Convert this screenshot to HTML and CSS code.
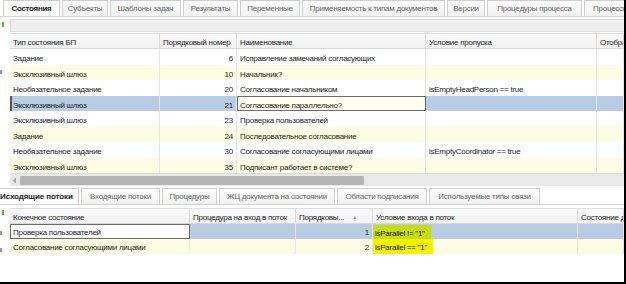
FILE: index.html
```html
<!DOCTYPE html>
<html lang="ru">
<head>
    <meta charset="UTF-8">
    <title>Состояния</title>
    <link rel="stylesheet" href="styles.css">
</head>
<body>

<div class="frame">
    <div class="tabs top-tabs">
        <span class="tab active">Состояния</span>
        <span class="tab">Субъекты</span>
        <span class="tab">Шаблоны задач</span>
        <span class="tab">Результаты</span>
        <span class="tab">Переменные</span>
        <span class="tab">Применяемость к типам документов</span>
        <span class="tab">Версии</span>
        <span class="tab">Процедуры процесса</span>
        <span class="tab">Процессы</span>
    </div>

    <div class="pane">
        <div class="gutter">
            <span class="mark green m1"></span>
            <span class="mark gray m2"></span>
        </div>
        <div class="main">
            <div class="toolbar"></div>

            <div class="grid states">
                <div class="row head">
                    <div class="cell">Тип состояния БП</div>
                    <div class="cell">Порядковый номер</div>
                    <div class="cell">Наименование</div>
                    <div class="cell">Условие пропуска</div>
                    <div class="cell">Отобра</div>
                </div>
                <div class="row">
                    <div class="cell">Задание</div>
                    <div class="cell num">6</div>
                    <div class="cell">Исправление замечаний согласующих</div>
                    <div class="cell"></div>
                    <div class="cell"></div>
                </div>
                <div class="row alt">
                    <div class="cell">Эксклюзивный шлюз</div>
                    <div class="cell num">10</div>
                    <div class="cell">Начальник?</div>
                    <div class="cell"></div>
                    <div class="cell"></div>
                </div>
                <div class="row">
                    <div class="cell">Необязательное задание</div>
                    <div class="cell num">20</div>
                    <div class="cell">Согласование начальником</div>
                    <div class="cell">isEmptyHeadPerson == true</div>
                    <div class="cell"></div>
                </div>
                <div class="row selected">
                    <div class="cell">Эксклюзивный шлюз</div>
                    <div class="cell num">21</div>
                    <div class="cell focus">Согласование параллельно?</div>
                    <div class="cell"></div>
                    <div class="cell"></div>
                </div>
                <div class="row">
                    <div class="cell">Эксклюзивный шлюз</div>
                    <div class="cell num">23</div>
                    <div class="cell">Проверка пользователей</div>
                    <div class="cell"></div>
                    <div class="cell"></div>
                </div>
                <div class="row alt">
                    <div class="cell">Задание</div>
                    <div class="cell num">24</div>
                    <div class="cell">Последовательное согласование</div>
                    <div class="cell"></div>
                    <div class="cell"></div>
                </div>
                <div class="row">
                    <div class="cell">Необязательное задание</div>
                    <div class="cell num">30</div>
                    <div class="cell">Согласование согласующими лицами</div>
                    <div class="cell">isEmptyCoordinator == true</div>
                    <div class="cell"></div>
                </div>
                <div class="row alt">
                    <div class="cell">Эксклюзивный шлюз</div>
                    <div class="cell num">35</div>
                    <div class="cell">Подписант работает в системе?</div>
                    <div class="cell"></div>
                    <div class="cell"></div>
                </div>

                <div class="scrollbar">
                    <svg class="scroll-arrow" width="10" height="11" viewBox="0 0 10 11"><path d="M6 2.5 L3 5.5 L6 8.5 Z" fill="#a4a4a4"/></svg>
                    <div class="scroll-thumb"></div>
                </div>
            </div>
        </div>
    </div>

    <div class="tabs bottom-tabs">
        <span class="tab active">Исходящие потоки</span>
        <span class="tab">Входящие потоки</span>
        <span class="tab">Процедуры</span>
        <span class="tab">ЖЦ документа на состоянии</span>
        <span class="tab">Области подписания</span>
        <span class="tab">Используемые типы связи</span>
    </div>

    <div class="pane">
        <div class="gutter">
            <span class="mark green m3"></span>
            <span class="mark gray m4"></span>
            <span class="mark gray m5"></span>
        </div>
        <div class="main">
            <div class="grid flows">
                <div class="row head">
                    <div class="cell">Конечное состояние</div>
                    <div class="cell">Процедура на вход в поток</div>
                    <div class="cell sort">Порядковы... <span class="sort-arrow">&#9650;</span></div>
                    <div class="cell">Условие входа в поток</div>
                    <div class="cell">Состояние дл</div>
                </div>
                <div class="row selected">
                    <div class="cell edit">Проверка пользователей</div>
                    <div class="cell"></div>
                    <div class="cell num">1</div>
                    <div class="cell cond"><span class="marker on-blue">isParallel != "1"</span></div>
                    <div class="cell"></div>
                </div>
                <div class="row alt">
                    <div class="cell">Согласование согласующими лицами</div>
                    <div class="cell"></div>
                    <div class="cell num">2</div>
                    <div class="cell cond"><span class="marker">isParallel == "1"</span></div>
                    <div class="cell"></div>
                </div>
            </div>
        </div>
    </div>
</div>

</body>
</html>
```

FILE: styles.css
```css
/* Global */
body {
    margin: 0;
    font-family: 'Liberation Sans', Arial, sans-serif;
    font-size: 8px;
    letter-spacing: -0.25px;
    color: #222;
    background: #fff;
}

.frame {
    width: 624px;
    height: 282px;
    border-right: 2px solid #000;
    border-bottom: 2px solid #000;
    overflow: hidden;
}

/* Tabs */
.tabs {
    display: flex;
    gap: 2px;
    height: 17px;
    border-bottom: 1px solid #d4d4d4;
    box-sizing: border-box;
    overflow: hidden;
}

.top-tabs {
    padding-left: 3px;
}

.bottom-tabs {
    margin-top: 2px;
    margin-left: -6px;
}

.tab {
    display: flex;
    align-items: center;
    justify-content: center;
    flex-shrink: 0;
    border: 1px solid #cfcfcf;
    border-bottom: none;
    background: linear-gradient(#fdfdfd, #f1f1f1);
    color: #666;
    white-space: nowrap;
    box-sizing: border-box;
}

.tab.active {
    background: #fff;
    color: #222;
    font-weight: bold;
    letter-spacing: -0.3px;
}

.top-tabs .tab:nth-child(1) { width: 57px; }
.top-tabs .tab:nth-child(2) { width: 46px; }
.top-tabs .tab:nth-child(3) { width: 71px; }
.top-tabs .tab:nth-child(4) { width: 55px; }
.top-tabs .tab:nth-child(5) { width: 60px; }
.top-tabs .tab:nth-child(6) { width: 143px; }
.top-tabs .tab:nth-child(7) { width: 38px; }
.top-tabs .tab:nth-child(8) { width: 95px; }
.top-tabs .tab:nth-child(9) { width: 80px; justify-content: flex-start; padding-left: 8px; }

.bottom-tabs .tab:nth-child(1) { width: 85px; justify-content: flex-start; padding-left: 5px; letter-spacing: -0.1px; }
.bottom-tabs .tab:nth-child(2) { width: 79px; }
.bottom-tabs .tab:nth-child(3) { width: 55px; }
.bottom-tabs .tab:nth-child(4) { width: 116px; }
.bottom-tabs .tab:nth-child(5) { width: 90px; }
.bottom-tabs .tab:nth-child(6) { width: 111px; }

/* Pane with left gutter */
.pane {
    display: flex;
}

.gutter {
    width: 10px;
    position: relative;
    flex-shrink: 0;
}

.mark {
    position: absolute;
    left: 2px;
    width: 2px;
}

.mark.green { background: #5cb531; height: 5px; }
.mark.gray { background: #9a9a9a; height: 4px; left: 0; }

.m1 { top: 5px; }
.m2 { top: 53px; }
.m3 { top: 5px; }
.m4 { top: 26px; }
.m5 { top: 43px; }

.main {
    flex: 1;
    min-width: 0;
}

.toolbar {
    height: 11px;
    margin-top: 2px;
    background: #eeeeee;
    border: 1px solid #dcdcdc;
    border-right: none;
}

/* Grids */
.grid {
    margin-top: 1px;
}

.row {
    display: grid;
    height: 15.5px;
    background: #fff;
}

.states .row {
    grid-template-columns: 150px 77px 189px 171px 1fr;
}

.states .cell {
    padding-top: 4px;
}

.states .row.head .cell {
    padding-top: 3px;
}

.flows {
    margin-top: 3px;
}

.flows .row {
    grid-template-columns: 180px 106px 77px 205px 1fr;
    height: 15px;
}

.flows .cell {
    padding-top: 2px;
}

.row.alt {
    background: #fdfde4;
}

.row.selected {
    background: #b8cce4;
}

.states .row.selected .cell:first-child {
    border-left: 2px solid #555;
    padding-left: 1px;
}

.row.head {
    height: 16px;
    background: linear-gradient(#fafafa, #f2f2f2);
    border-top: 1px solid #dedede;
    border-bottom: 1px solid #d8d8d8;
    box-sizing: border-box;
}

.cell {
    display: flex;
    align-items: center;
    padding: 0 3px;
    border-right: 1px solid #e6e6e6;
    white-space: nowrap;
    overflow: hidden;
    box-sizing: border-box;
}

.row.head .cell {
    border-right-color: #d8d8d8;
}

.cell.num {
    justify-content: flex-end;
}

.cell.focus {
    background: #fffff0;
    border: 1px solid #6b6b6b;
    padding-left: 2px;
}

.cell.edit {
    background: #fff;
    border: 1px solid #6b6b6b;
    padding-left: 2px;
}

.sort {
    justify-content: space-between;
}

.sort-arrow {
    color: #7b93b6;
    font-size: 5px;
    margin-right: 12px;
}

/* Highlighted condition, like a marker stroke */
.flows .cell.cond {
    padding: 0;
    align-items: stretch;
}

.marker {
    display: flex;
    align-items: center;
    background: #f2f200;
    padding: 2px 6px 0 3px;
    margin-left: -1px;
}

.marker.on-blue {
    background: #c6dc16;
    margin-top: 1px;
}

/* Horizontal scrollbar under the states grid */
.scrollbar {
    display: flex;
    align-items: center;
    height: 13px;
    background: #e9e9e9;
    border-top: 1px solid #d9d9d9;
    box-sizing: border-box;
}

.scroll-arrow {
    flex: none;
    display: block;
}

.scroll-thumb {
    flex: none;
    width: 344px;
    height: 9px;
    background: #b4b4b4;
    border-radius: 1px;
}
```
